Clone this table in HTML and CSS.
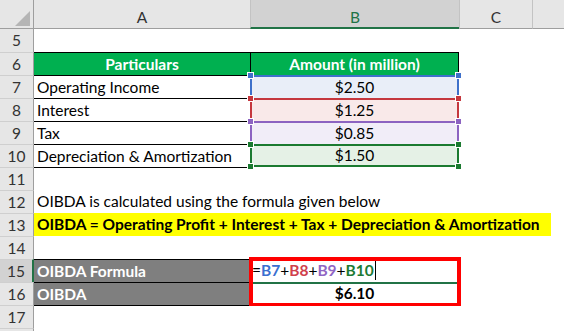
FILE: index.html
```html
<!DOCTYPE html>
<html>
<head>
<meta charset="utf-8">
<link rel="stylesheet" href="styles.css">
</head>
<body>
<div class="sheet">
  <div class="corner"><svg width="34" height="28" viewBox="0 0 34 28"><polygon points="30,11 30,26 15,26" fill="#b5b5b5"/></svg></div>
  <div class="colhdr">A</div>
  <div class="colhdr colhdr--sel">B</div>
  <div class="colhdr">C</div>
  <div class="colhdr"></div>

  <div class="rowhdr rowhdr--first">5</div>
  <div class="cell span-all"></div>

  <div class="rowhdr">6</div>
  <div class="cell th th--a">Particulars</div>
  <div class="cell th th--b">Amount (in million)</div>
  <div class="cell span-rest"></div>

  <div class="rowhdr">7</div>
  <div class="cell txt bt">Operating Income</div>
  <div class="cell hl hl--blue">$2.50<span class="hdl tl"></span><span class="hdl tr"></span></div>
  <div class="cell span-rest"></div>

  <div class="rowhdr">8</div>
  <div class="cell txt bt">Interest</div>
  <div class="cell hl hl--red">$1.25<span class="hdl tl"></span><span class="hdl tr"></span></div>
  <div class="cell span-rest"></div>

  <div class="rowhdr">9</div>
  <div class="cell txt bt">Tax</div>
  <div class="cell hl hl--purple">$0.85<span class="hdl tl"></span><span class="hdl tr"></span></div>
  <div class="cell span-rest"></div>

  <div class="rowhdr">10</div>
  <div class="cell txt bt">Depreciation &amp; Amortization</div>
  <div class="cell hl hl--green hl--last">$1.50<span class="hdl tl"></span><span class="hdl tr"></span><span class="hdl bl"></span><span class="hdl br"></span></div>
  <div class="cell span-rest"></div>

  <div class="rowhdr">11</div>
  <div class="cell bt"></div>
  <div class="cell span-b"></div>

  <div class="rowhdr">12</div>
  <div class="cell txt span-all">OIBDA is calculated using the formula given below</div>

  <div class="rowhdr">13</div>
  <div class="cell txt span-all yellow">OIBDA = Operating Profit + Interest + Tax + Depreciation &amp; Amortization</div>

  <div class="rowhdr">14</div>
  <div class="cell span-all"></div>

  <div class="rowhdr rowhdr--sel">15</div>
  <div class="cell txt bt dark">OIBDA Formula</div>
  <div class="cell formula"><span class="op">=</span><span class="f-blue">B7</span><span class="op">+</span><span class="f-red">B8</span><span class="op">+</span><span class="f-purple">B9</span><span class="op">+</span><span class="f-green">B10</span><span class="caret"></span><span class="redbox"></span></div>
  <div class="cell span-rest"></div>

  <div class="rowhdr">16</div>
  <div class="cell txt bt dark">OIBDA</div>
  <div class="cell result">$6.10</div>
  <div class="cell span-rest"></div>

  <div class="rowhdr">17</div>
  <div class="cell bt"></div>
  <div class="cell span-b"></div>

  <div class="rowhdr"></div>
  <div class="cell span-all"></div>
</div>
</body>
</html>
```

FILE: styles.css
```css
* { box-sizing: border-box; }
html, body {
  margin: 0;
  padding: 0;
  background: #ffffff;
  overflow: hidden;
}
body {
  font-family: Lato, "Open Sans", sans-serif;
  font-size: 15.5px;
  color: #000;
}
.sheet {
  display: grid;
  grid-template-columns: 34px 216px 209px 73px 1fr;
  grid-template-rows: 29px;
  grid-auto-rows: 23px;
  width: 564px;
  height: 331px;
  overflow: hidden;
}
.corner {
  background: #e6e6e6;
  border-right: 1px solid #9e9e9e;
  border-bottom: 1px solid #9e9e9e;
  overflow: hidden;
}
.corner svg { display: block; }
.colhdr {
  background: #e6e6e6;
  border-bottom: 1px solid #9e9e9e;
  border-left: 1px solid #c3c3c3;
  text-align: center;
  color: #333;
  padding-top: 6px;
  line-height: 22px;
}
.colhdr:nth-child(2) { border-left: none; }
.colhdr--sel {
  background: #d2d2d2;
  color: #217346;
  border-bottom: 2px solid #217346;
}
.rowhdr {
  grid-column: 1;
  background: #e6e6e6;
  border-right: 1px solid #9e9e9e;
  border-top: 1px solid #cfcfcf;
  text-align: center;
  color: #333;
  line-height: 22px;
}
.rowhdr--first { border-top: none; line-height: 23px; }
.rowhdr--sel {
  background: #d2d2d2;
  border-right: 2px solid #217346;
}
.cell {
  line-height: 22px;
  white-space: nowrap;
  position: relative;
}
.bt { border-top: 1px solid #000; }
.txt { padding-left: 3px; }
.span-all { grid-column: 2 / 6; }
.span-rest { grid-column: 4 / 6; }
.span-b { grid-column: 3 / 6; }

.th {
  background: #00b050;
  color: #fff;
  font-weight: 700;
  text-align: center;
  border-top: 1px solid #000;
}
.th--b {
  border-left: 1px solid #000;
  border-right: 1px solid #000;
}

.hl {
  text-align: center;
  border-top: 2px solid;
  border-left: 2px solid;
  border-right: 2px solid;
  line-height: 21px;
}
.hl--blue { border-color: #3e70ca; background: #e9eef8; }
.hl--red { border-color: #c5373e; background: #f9e9e9; }
.hl--purple { border-color: #8c63c1; background: #f1edf8; }
.hl--green { border-color: #1b7a30; background: #e5f1e6; }
.hl--last { border-bottom: 2px solid #1b7a30; line-height: 19px; }

.hdl {
  position: absolute;
  width: 7px;
  height: 7px;
  border: 1px solid #fff;
  z-index: 3;
}
.hl--blue .hdl { background: #3e70ca; }
.hl--red .hdl { background: #c5373e; }
.hl--purple .hdl { background: #8c63c1; }
.hl--green .hdl { background: #1b7a30; }
.hdl.tl { left: -5px; top: -5px; }
.hdl.tr { right: -5px; top: -5px; }
.hdl.bl { left: -5px; bottom: -5px; }
.hdl.br { right: -5px; bottom: -5px; }

.yellow {
  background: #ffff00;
  font-weight: 700;
  margin-right: 13px;
}
.dark {
  background: #7f7f7f;
  color: #fff;
  font-weight: 700;
}
.formula {
  font-weight: 700;
  padding-left: 2px;
}
.formula .op { font-weight: 400; }
.formula::after {
  content: "";
  position: absolute;
  left: 2px;
  right: 2px;
  bottom: -2px;
  height: 2px;
  background: #217346;
}
.f-blue { color: #3b6fd0; }
.f-red { color: #d0404c; }
.f-purple { color: #9066c4; }
.f-green { color: #1d7a34; }
.caret {
  display: inline-block;
  width: 1px;
  height: 19px;
  background: #000;
  vertical-align: -4px;
  margin-left: 1px;
}
.result {
  font-weight: 700;
  text-align: center;
  border-top: 1px solid transparent;
  line-height: 21px;
}
.redbox {
  position: absolute;
  left: -1px;
  top: -2px;
  width: 212px;
  height: 49px;
  border: 4px solid #ff0000;
  border-bottom-width: 3px;
  z-index: 4;
  pointer-events: none;
}
```
